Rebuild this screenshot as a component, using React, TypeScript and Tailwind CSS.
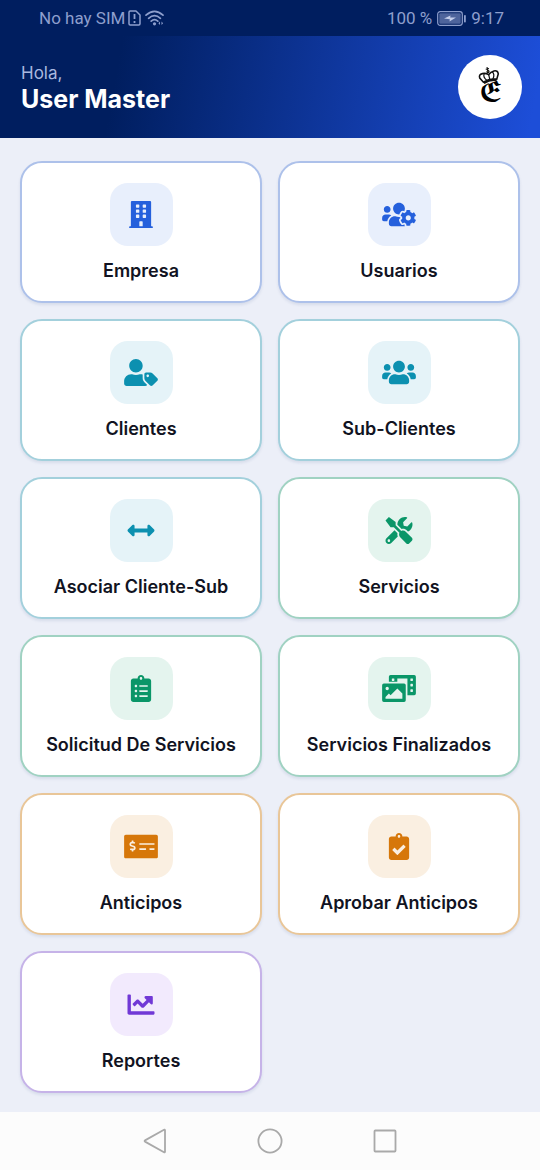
import React from 'react';
import type { IconType } from 'react-icons';
import {
  FaArrowsAltH,
  FaBuilding,
  FaChartLine,
  FaClipboardCheck,
  FaClipboardList,
  FaMoneyCheckAlt,
  FaPhotoVideo,
  FaTools,
  FaUsers,
  FaUsersCog,
  FaUserTag,
} from 'react-icons/fa';

type Tone = 'blue' | 'cyan' | 'green' | 'orange' | 'purple';

const TONES: Record<Tone, { card: string; tile: string }> = {
  blue: { card: 'border-[#adc1ea]', tile: 'bg-[#e8effc] text-[#2560dc]' },
  cyan: { card: 'border-[#a3d0dc]', tile: 'bg-[#e5f3f8] text-[#0c90b0]' },
  green: { card: 'border-[#a0d2c2]', tile: 'bg-[#e4f4ee] text-[#0a9668]' },
  orange: { card: 'border-[#e9c698]', tile: 'bg-[#faefe1] text-[#d6770a]' },
  purple: { card: 'border-[#c6b3e8]', tile: 'bg-[#f2eafd] text-[#7139d6]' },
};

const MENU: { label: string; icon: IconType; tone: Tone }[] = [
  { label: 'Empresa', icon: FaBuilding, tone: 'blue' },
  { label: 'Usuarios', icon: FaUsersCog, tone: 'blue' },
  { label: 'Clientes', icon: FaUserTag, tone: 'cyan' },
  { label: 'Sub-Clientes', icon: FaUsers, tone: 'cyan' },
  { label: 'Asociar Cliente-Sub', icon: FaArrowsAltH, tone: 'cyan' },
  { label: 'Servicios', icon: FaTools, tone: 'green' },
  { label: 'Solicitud De Servicios', icon: FaClipboardList, tone: 'green' },
  { label: 'Servicios Finalizados', icon: FaPhotoVideo, tone: 'green' },
  { label: 'Anticipos', icon: FaMoneyCheckAlt, tone: 'orange' },
  { label: 'Aprobar Anticipos', icon: FaClipboardCheck, tone: 'orange' },
  { label: 'Reportes', icon: FaChartLine, tone: 'purple' },
];

function StatusBar() {
  return (
    <div className="flex h-9 items-center justify-between bg-[#001e5f] pr-9 pl-[39px] font-['Roboto',sans-serif] text-[17px] leading-5 text-[#8e9fcd]">
      <div className="flex items-center gap-[3px]">
        <span>No hay SIM</span>
        <svg className="h-4 w-[13px]" viewBox="0 0 13 16" fill="none" stroke="currentColor" strokeWidth="1.5">
          <path d="M1 2.2Q1 1 2.2 1H8l4 4v8.8q0 1.2-1.2 1.2H2.2Q1 15 1 13.8z" strokeLinejoin="round" />
          <path d="M6.5 4v5M6.5 11v2" strokeWidth="1.8" />
        </svg>
        <svg className="ml-px h-4 w-5" viewBox="0 0 20 16" fill="none" stroke="currentColor" strokeWidth="1.7">
          <path d="M1 5.2Q9.5-2.6 18 5.2M3.6 8.3q5.9-5.4 11.8 0M6.2 11.2q3.3-3 6.6 0" strokeLinecap="round" />
          <circle cx="9.5" cy="13.8" r="1.6" fill="currentColor" stroke="none" />
          <path d="M15 11.5l-1.6 1.8 1.6 1.8zM16.5 11.5l1.6 1.8-1.6 1.8z" fill="currentColor" stroke="none" />
        </svg>
      </div>
      <div className="flex items-center gap-[5px]">
        <span>100 %</span>
        <svg className="h-[15px] w-[29px]" viewBox="0 0 29 15">
          <rect x="0.7" y="0.7" width="24.6" height="13.6" rx="2.5" fill="none" stroke="currentColor" strokeWidth="1.2" />
          <rect x="2.3" y="2.3" width="21.4" height="10.4" rx="1" fill="currentColor" opacity="0.55" />
          <path d="M7 7.6l6.5-3-.3 2H19l-6.500 4 .3-2.400z" fill="#c3cdea" />
          <rect x="27" y="4" width="1.8" height="7.5" rx="0.8" fill="currentColor" />
        </svg>
        <span>9:17</span>
      </div>
    </div>
  );
}

function BrandLogo() {
  return (
    <svg className="h-10 w-7 overflow-visible" viewBox="0 0 28 40" aria-hidden="true">
      <g fill="none" stroke="#111" strokeWidth="1.2" transform="translate(2 -1) rotate(-13 11 10)">
        <path
          d="M4.5 15.500L1.500 10q-.4-3.800 3.600-3.800 3.200 0 5.900 2.400 2.700-2.400 5.900-2.400 4 0 3.600 3.800l-3 5.500"
          strokeWidth="1.6"
        />
        <path d="M8 14Q4.500 9.500 7 6.500M14 14q3.500-4.500 1-7.500M11 8.600V14" />
        <path d="M4.300 15.400q6.700-2.500 13.400 0" strokeWidth="2.800" />
        <path d="M11 1v4M9.300 2.700h3.400" />
        <circle cx="11" cy="5.600" r="1" fill="#c9b44a" />
      </g>
      <text
        x="15"
        y="34"
        textAnchor="middle"
        fontSize="26"
        fill="#000"
        fontFamily="'DejaVu Math TeX Gyre', 'DejaVu Serif', serif"
      >
        𝕰
      </text>
    </svg>
  );
}

function Header() {
  return (
    <header className="flex items-center justify-between bg-linear-[100deg,#001e5f_22%,#1d4ed8_98%] py-[19px] pr-[18px] pl-[21px]">
      <div className="pb-px">
        <p className="text-[17px] leading-6 text-[#a9b8df]">Hola,</p>
        <h1 className="text-[25px] leading-7 font-bold text-white">User Master</h1>
      </div>
      <button aria-label="Perfil" className="flex size-16 items-center justify-center rounded-full bg-white">
        <BrandLogo />
      </button>
    </header>
  );
}

function MenuCard({ label, icon: Icon, tone }: { label: string; icon: IconType; tone: Tone }) {
  return (
    <button
      className={`flex flex-col items-center gap-3.5 rounded-[22px] border-2 bg-white py-5 shadow-[0_2px_3px_rgba(30,60,120,0.1)] ${TONES[tone].card}`}
    >
      <span className={`flex size-[63px] items-center justify-center rounded-[18px] ${TONES[tone].tile}`}>
        <Icon className="h-[27px] w-[34px]" />
      </span>
      <span className="text-lg leading-[21px] font-semibold whitespace-nowrap text-[#111322]">{label}</span>
    </button>
  );
}

function NavBar() {
  return (
    <nav className="flex h-[58px] items-center justify-center gap-[89px] bg-[#fcfcfc] text-[#a9a9a9]">
      <button aria-label="Atrás">
        <svg className="size-[26px]" viewBox="0 0 26 26" fill="none" stroke="currentColor" strokeWidth="1.8" strokeLinejoin="round">
          <path d="M23 2.200v21.600q-.2.800-1 .4L3 13.600q-.8-.6 0-1.200L22 1.800q.8-.4 1 .4z" />
        </svg>
      </button>
      <button aria-label="Inicio">
        <svg className="size-[26px]" viewBox="0 0 26 26" fill="none" stroke="currentColor" strokeWidth="1.8">
          <circle cx="13" cy="13" r="11.6" />
        </svg>
      </button>
      <button aria-label="Recientes">
        <svg className="size-[26px]" viewBox="0 0 26 26" fill="none" stroke="currentColor" strokeWidth="1.8">
          <rect x="2.500" y="2.500" width="21" height="21" rx="0.8" />
        </svg>
      </button>
    </nav>
  );
}

export default function App() {
  return (
    <div className="flex min-h-screen flex-col bg-[#eceff8] font-['Inter',sans-serif]">
      <StatusBar />
      <Header />
      <main className="grid flex-1 grid-cols-2 content-start gap-4 px-5 pt-[23px] pb-[18px]">
        {MENU.map((item) => (
          <MenuCard key={item.label} {...item} />
        ))}
      </main>
      <NavBar />
    </div>
  );
}
